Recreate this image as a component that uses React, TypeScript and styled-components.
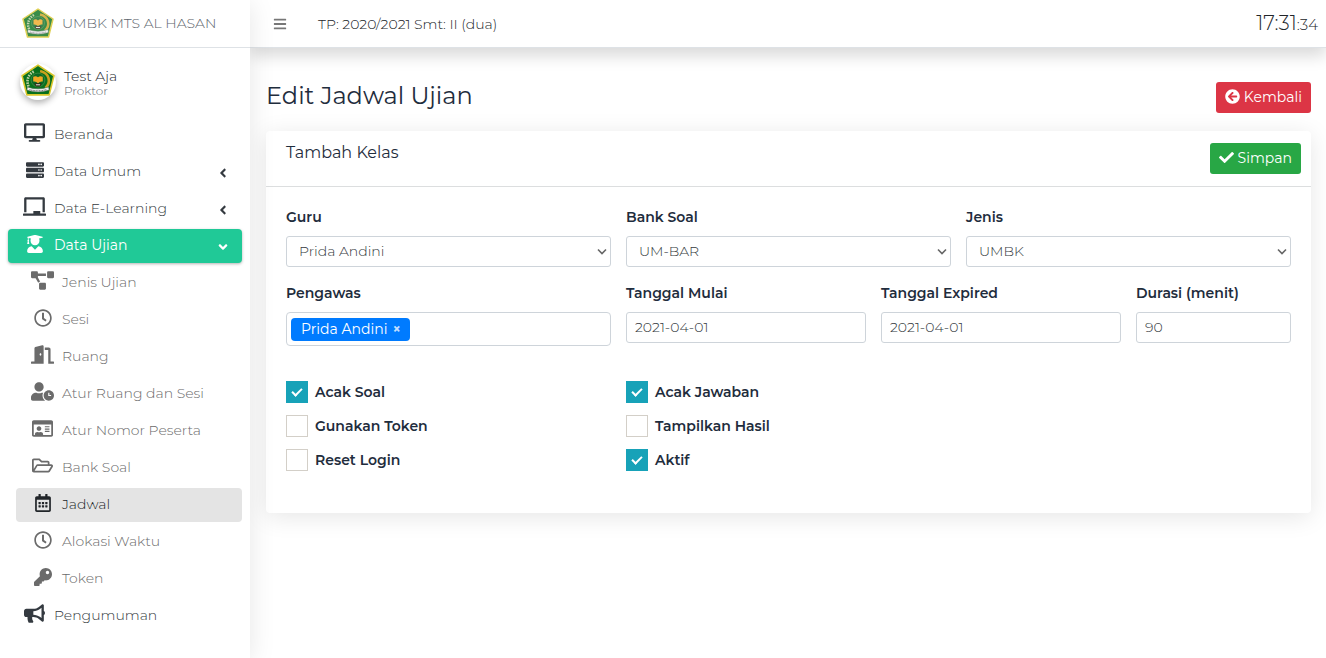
import React, { useId, useState } from "react";
import styled, { createGlobalStyle, css } from "styled-components";
import type { IconType } from "react-icons";
import {
  FaAngleDown,
  FaAngleLeft,
  FaArrowCircleLeft,
  FaBars,
  FaBullhorn,
  FaChalkboard,
  FaCheck,
  FaDesktop,
  FaDoorOpen,
  FaKey,
  FaProjectDiagram,
  FaRegCalendarAlt,
  FaRegClock,
  FaRegFolderOpen,
  FaRegIdCard,
  FaServer,
  FaUserClock,
  FaUserGraduate,
} from "react-icons/fa";

const fontStack = `Montserrat, Inter, "Open Sans", sans-serif`;
const shadow = "0 4px 25px rgba(0, 0, 0, 0.1)";

const GlobalStyle = createGlobalStyle`
  *, *::before, *::after { box-sizing: border-box; }
  body {
    margin: 0;
    background: #fff;
    color: #212529;
    font-family: ${fontStack};
    font-size: 14px;
    font-weight: 300;
    line-height: 24px;
  }
  button, input, select { font-family: inherit; }
`;

const Page = styled.div`
  display: flex;
  min-height: 100vh;
`;

const Sidebar = styled.aside`
  position: relative;
  z-index: 2;
  flex: 0 0 250px;
  background: #fff;
  box-shadow: ${shadow};
`;

const Brand = styled.a`
  display: flex;
  align-items: center;
  gap: 8px;
  height: 48px;
  padding: 0 22px 2px;
  border-bottom: 1px solid #dee2e6;
  color: #5c656d;
  text-decoration: none;
  white-space: nowrap;
`;

const UserPanel = styled.div`
  display: flex;
  align-items: center;
  gap: 8px;
  padding: 16px 20px 18px;
`;

const Avatar = styled.span`
  display: flex;
  align-items: center;
  justify-content: center;
  width: 36px;
  height: 36px;
  padding-bottom: 4px;
  border-radius: 50%;
  box-shadow: 0 3px 6px rgba(0, 0, 0, 0.3);
`;

const UserName = styled.div`
  padding-top: 2px;
  line-height: 16px;
  color: #212529;
`;

const UserRole = styled.div`
  font-size: 12px;
  line-height: 14px;
  color: #5c656d;
`;

const Menu = styled.ul`
  display: flex;
  flex-direction: column;
  gap: 3px;
  margin: 0;
  padding: 0 8px;
  list-style: none;
`;

const SubMenu = styled(Menu)`
  margin-top: 3px;
  padding: 0 0 0 8px;
`;

const MenuLink = styled.a<{ $sub?: boolean; $open?: boolean; $current?: boolean }>`
  display: flex;
  align-items: center;
  gap: 7px;
  height: 34px;
  padding: 0 12px 5px 14px;
  border-radius: 4px;
  color: #343a40;
  text-decoration: none;
  ${(p) => p.$sub && css`
    color: #6b6b6b;
  `}
  ${(p) => p.$open && css`
    background: #20c997;
    color: #fff;
    font-weight: 400;
    box-shadow: 0 1px 3px rgba(0, 0, 0, 0.3);
  `}
  ${(p) => p.$current && css`
    background: #e4e4e4;
    color: #212529;
  `}
`;

const MenuIcon = styled.span`
  display: flex;
  justify-content: center;
  flex: 0 0 25px;
`;

const MenuText = styled.span`
  flex: 1;
  padding-top: 2px;
  white-space: nowrap;
`;

const MenuArrow = styled.span`
  display: flex;
  padding-top: 6px;
  font-size: 14px;
`;

const Main = styled.div`
  flex: 1;
  min-width: 0;
`;

const Navbar = styled.header`
  display: flex;
  align-items: center;
  height: 48px;
  padding: 0 8px 0 16px;
  border-bottom: 1px solid #dee2e6;
  background: #fff;
  box-shadow: 0 8px 16px rgba(0, 0, 0, 0.15);
`;

const ToggleButton = styled.button`
  display: flex;
  width: 28px;
  padding: 7px;
  border: 0;
  background: none;
  color: #777;
  font-size: 14px;
`;

const Period = styled.span`
  flex: 1;
  margin-left: 24px;
  color: #212529;
`;

const Clock = styled.time`
  font-size: 20px;
`;

const Seconds = styled.span`
  font-size: 15px;
`;

const Content = styled.main`
  padding: 34px 15px 32px 16px;
`;

const TitleRow = styled.div`
  display: flex;
  align-items: flex-start;
  justify-content: space-between;
  margin-bottom: 18px;
`;

const Title = styled.h1`
  margin: 0;
  color: #1f2d3d;
  font-size: 24px;
  font-weight: 400;
  line-height: 28px;
`;

const ActionButton = styled.button<{ $tone: string }>`
  display: flex;
  align-items: center;
  gap: 4px;
  height: 31px;
  padding: 0 9px 2px;
  border: 0;
  border-radius: 3px;
  background: ${(p) => p.$tone};
  color: #fff;
  font-size: 14px;
  font-weight: 400;
  svg {
    width: 15px;
    height: 15px;
  }
`;

const Card = styled.section`
  border-radius: 4px;
  background: #fff;
  box-shadow: ${shadow};
`;

const CardHeader = styled.div`
  display: flex;
  align-items: flex-start;
  justify-content: space-between;
  padding: 12px 10px 12px 20px;
  border-bottom: 1px solid #dcdedf;
`;

const CardTitle = styled.h2`
  margin: 0;
  color: #1f2d3d;
  font-size: 16px;
  font-weight: 400;
  line-height: 20px;
`;

const Form = styled.form`
  padding: 18px 20px 42px;
`;

const Fields = styled.div`
  display: grid;
  grid-template-columns: repeat(12, minmax(0, 1fr));
  gap: 14px 15px;
`;

const Field = styled.div<{ $span: number }>`
  grid-column: span ${(p) => p.$span};
`;

const Label = styled.label`
  display: block;
  margin-bottom: 7px;
  color: #1f2d3d;
  font-size: 14px;
  font-weight: 600;
`;

const control = css`
  display: block;
  width: 100%;
  height: 31px;
  padding: 4px 8px 5px;
  border: 1px solid #ced4da;
  border-radius: 3px;
  background: #fff;
  color: #343a40;
  font-size: 14px;
  font-weight: 300;
`;

const SelectWrap = styled.div`
  position: relative;
`;

const Select = styled.select`
  ${control}
  padding-left: 12px;
  appearance: none;
`;

const SelectArrow = styled.svg`
  position: absolute;
  top: 12px;
  right: 4px;
  width: 10px;
  height: 7px;
  fill: none;
  stroke: #666;
  stroke-width: 1.6;
  pointer-events: none;
`;

const Input = styled.input`
  ${control}
`;

const TagBox = styled.div`
  display: flex;
  height: 34px;
  padding: 5px 4px;
  border: 1px solid #ced4da;
  border-radius: 4px;
`;

const Tag = styled.span`
  display: flex;
  align-items: center;
  gap: 5px;
  height: 23px;
  padding: 0 9px 2px 10px;
  border-radius: 4px;
  background: #007bff;
  color: #fff;
  font-weight: 400;
  font-size: 14px;
`;

const TagRemove = styled.button`
  padding: 1px 0 0;
  border: 0;
  background: none;
  color: #c4dfff;
  font-size: 14px;
  font-weight: 700;
  line-height: 16px;
`;

const Options = styled.div`
  display: grid;
  grid-template-columns: repeat(3, minmax(0, 1fr));
  gap: 15px;
  margin-top: 35px;
`;

const OptionColumn = styled.div`
  display: flex;
  flex-direction: column;
  gap: 12px;
`;

const Option = styled.label`
  display: flex;
  align-items: center;
  gap: 7px;
  height: 22px;
  color: #1f2d3d;
  font-size: 14px;
  font-weight: 600;
`;

const Checkbox = styled.input`
  display: grid;
  place-items: center;
  width: 22px;
  height: 22px;
  margin: 0;
  border: 1px solid #d3cfc8;
  background: #fff;
  appearance: none;
  &:checked {
    border-color: #17a2b8;
    background: #17a2b8;
  }
  &:checked::after {
    content: "";
    width: 10px;
    height: 6px;
    margin-bottom: 3px;
    border: solid #fff;
    border-width: 0 0 2px 2px;
    transform: rotate(-45deg);
  }
`;

function Emblem({ size, faded }: { size: number; faded?: boolean }) {
  return (
    <svg width={size} height={size - 2} viewBox="0 0 64 60" opacity={faded ? 0.8 : 1} aria-hidden="true">
      <path d="M32 2 62 22 53 58H11L2 22Z" fill="#08701c" stroke="#d9c62c" strokeWidth="3" strokeLinejoin="round" />
      <path d="M24 14C13 20 9 32 15 44" fill="none" stroke="#bccda0" strokeWidth="5" strokeDasharray="3 2" />
      <path d="M36 13C54 17 57 35 46 45" fill="none" stroke="#c9a020" strokeWidth="5" />
      <circle cx="32" cy="30" r="13" fill="#0b6a26" stroke="#5f9a55" strokeWidth="1" />
      <path d="M23 24q5-3 9 1 4-4 9-1v9q-5-1-9 3-4-4-9-3Z" fill="#f0a823" />
      <path d="M25 36h14l-3 6h-8Z" fill="#332a12" />
      <path d="M28 39h8" stroke="#ddd" strokeWidth="2" />
      <path d="M12 43q20 7 40 0l1 6q-21 7-42 0Z" fill="#eee" stroke="#4a6a4a" strokeWidth="1" />
      <path d="M16 48q16 5 32 0" fill="none" stroke="#777" strokeWidth="2" strokeDasharray="2 1" />
    </svg>
  );
}

interface Entry {
  text: string;
  icon: IconType;
  /* Wide glyphs get a larger box so that all of them share one drawn height. */
  size: number;
  arrow?: boolean;
  current?: boolean;
  children?: Entry[];
}

const entries: Entry[] = [
  { text: "Beranda", icon: FaDesktop, size: 21 },
  { text: "Data Umum", icon: FaServer, size: 18 },
  { text: "Data E-Learning", icon: FaChalkboard, size: 23 },
  {
    text: "Data Ujian",
    icon: FaUserGraduate,
    size: 18,
    children: [
      { text: "Jenis Ujian", icon: FaProjectDiagram, size: 23 },
      { text: "Sesi", icon: FaRegClock, size: 18 },
      { text: "Ruang", icon: FaDoorOpen, size: 23 },
      { text: "Atur Ruang dan Sesi", icon: FaUserClock, size: 23 },
      { text: "Atur Nomor Peserta", icon: FaRegIdCard, size: 21 },
      { text: "Bank Soal", icon: FaRegFolderOpen, size: 21 },
      { text: "Jadwal", icon: FaRegCalendarAlt, size: 18, current: true },
      { text: "Alokasi Waktu", icon: FaRegClock, size: 18 },
      { text: "Token", icon: FaKey, size: 18 },
    ],
  },
  { text: "Pengumuman", icon: FaBullhorn, size: 21 },
].map((entry) => ({ ...entry, arrow: /Umum|Learning/.test(entry.text) }));

function MenuEntry({ entry, sub }: { entry: Entry; sub?: boolean }) {
  const Icon = entry.icon;
  return (
    <li>
      <MenuLink href="#" $sub={sub} $open={!!entry.children} $current={entry.current}>
        <MenuIcon><Icon size={entry.size} /></MenuIcon>
        <MenuText>{entry.text}</MenuText>
        {entry.arrow && <MenuArrow><FaAngleLeft /></MenuArrow>}
        {entry.children && <MenuArrow><FaAngleDown /></MenuArrow>}
      </MenuLink>
      {entry.children && (
        <SubMenu>
          {entry.children.map((child) => <MenuEntry key={child.text} entry={child} sub />)}
        </SubMenu>
      )}
    </li>
  );
}

function SelectField({ label, value }: { label: string; value: string }) {
  const id = useId();
  return (
    <Field $span={4}>
      <Label htmlFor={id}>{label}</Label>
      <SelectWrap>
        <Select id={id} defaultValue={value}><option>{value}</option></Select>
        <SelectArrow viewBox="0 0 10 7" aria-hidden="true"><path d="M1 1.5 5 5.5 9 1.5" /></SelectArrow>
      </SelectWrap>
    </Field>
  );
}

function TextField({ label, value, span }: { label: string; value: string; span: number }) {
  const id = useId();
  return (
    <Field $span={span}>
      <Label htmlFor={id}>{label}</Label>
      <Input id={id} type="text" defaultValue={value} />
    </Field>
  );
}

const optionColumns = [
  [
    { text: "Acak Soal", on: true },
    { text: "Gunakan Token", on: false },
    { text: "Reset Login", on: false },
  ],
  [
    { text: "Acak Jawaban", on: true },
    { text: "Tampilkan Hasil", on: false },
    { text: "Aktif", on: true },
  ],
];

export default function App() {
  const [supervisors, setSupervisors] = useState(["Prida Andini"]);
  return (
    <>
      <GlobalStyle />
      <Page>
        <Sidebar>
          <Brand href="#"><Emblem size={32} faded /><span>UMBK MTS AL HASAN</span></Brand>
          <UserPanel>
            <Avatar><Emblem size={34} /></Avatar>
            <div>
              <UserName>Test Aja</UserName>
              <UserRole>Proktor</UserRole>
            </div>
          </UserPanel>
          <nav>
            <Menu>{entries.map((entry) => <MenuEntry key={entry.text} entry={entry} />)}</Menu>
          </nav>
        </Sidebar>
        <Main>
          <Navbar>
            <ToggleButton type="button" aria-label="Menu"><FaBars /></ToggleButton>
            <Period>TP: 2020/2021 Smt: II (dua)</Period>
            <Clock>17:31<Seconds>:34</Seconds></Clock>
          </Navbar>
          <Content>
            <TitleRow>
              <Title>Edit Jadwal Ujian</Title>
              <ActionButton type="button" $tone="#dc3545"><FaArrowCircleLeft />Kembali</ActionButton>
            </TitleRow>
            <Card>
              <CardHeader>
                <CardTitle>Tambah Kelas</CardTitle>
                <ActionButton type="submit" form="jadwal" $tone="#28a745"><FaCheck />Simpan</ActionButton>
              </CardHeader>
              <Form id="jadwal" onSubmit={(e) => e.preventDefault()}>
                <Fields>
                  <SelectField label="Guru" value="Prida Andini" />
                  <SelectField label="Bank Soal" value="UM-BAR" />
                  <SelectField label="Jenis" value="UMBK" />
                  <Field $span={4} role="group" aria-labelledby="pengawas">
                    <Label as="span" id="pengawas">Pengawas</Label>
                    <TagBox>
                      {supervisors.map((name) => (
                        <Tag key={name}>
                          {name}
                          <TagRemove
                            type="button"
                            onClick={() => setSupervisors(supervisors.filter((n) => n !== name))}
                          >
                            ×
                          </TagRemove>
                        </Tag>
                      ))}
                    </TagBox>
                  </Field>
                  <TextField label="Tanggal Mulai" value="2021-04-01" span={3} />
                  <TextField label="Tanggal Expired" value="2021-04-01" span={3} />
                  <TextField label="Durasi (menit)" value="90" span={2} />
                </Fields>
                <Options>
                  {optionColumns.map((column) => (
                    <OptionColumn key={column[0].text}>
                      {column.map((option) => (
                        <Option key={option.text}>
                          <Checkbox type="checkbox" defaultChecked={option.on} />
                          {option.text}
                        </Option>
                      ))}
                    </OptionColumn>
                  ))}
                </Options>
              </Form>
            </Card>
          </Content>
        </Main>
      </Page>
    </>
  );
}
